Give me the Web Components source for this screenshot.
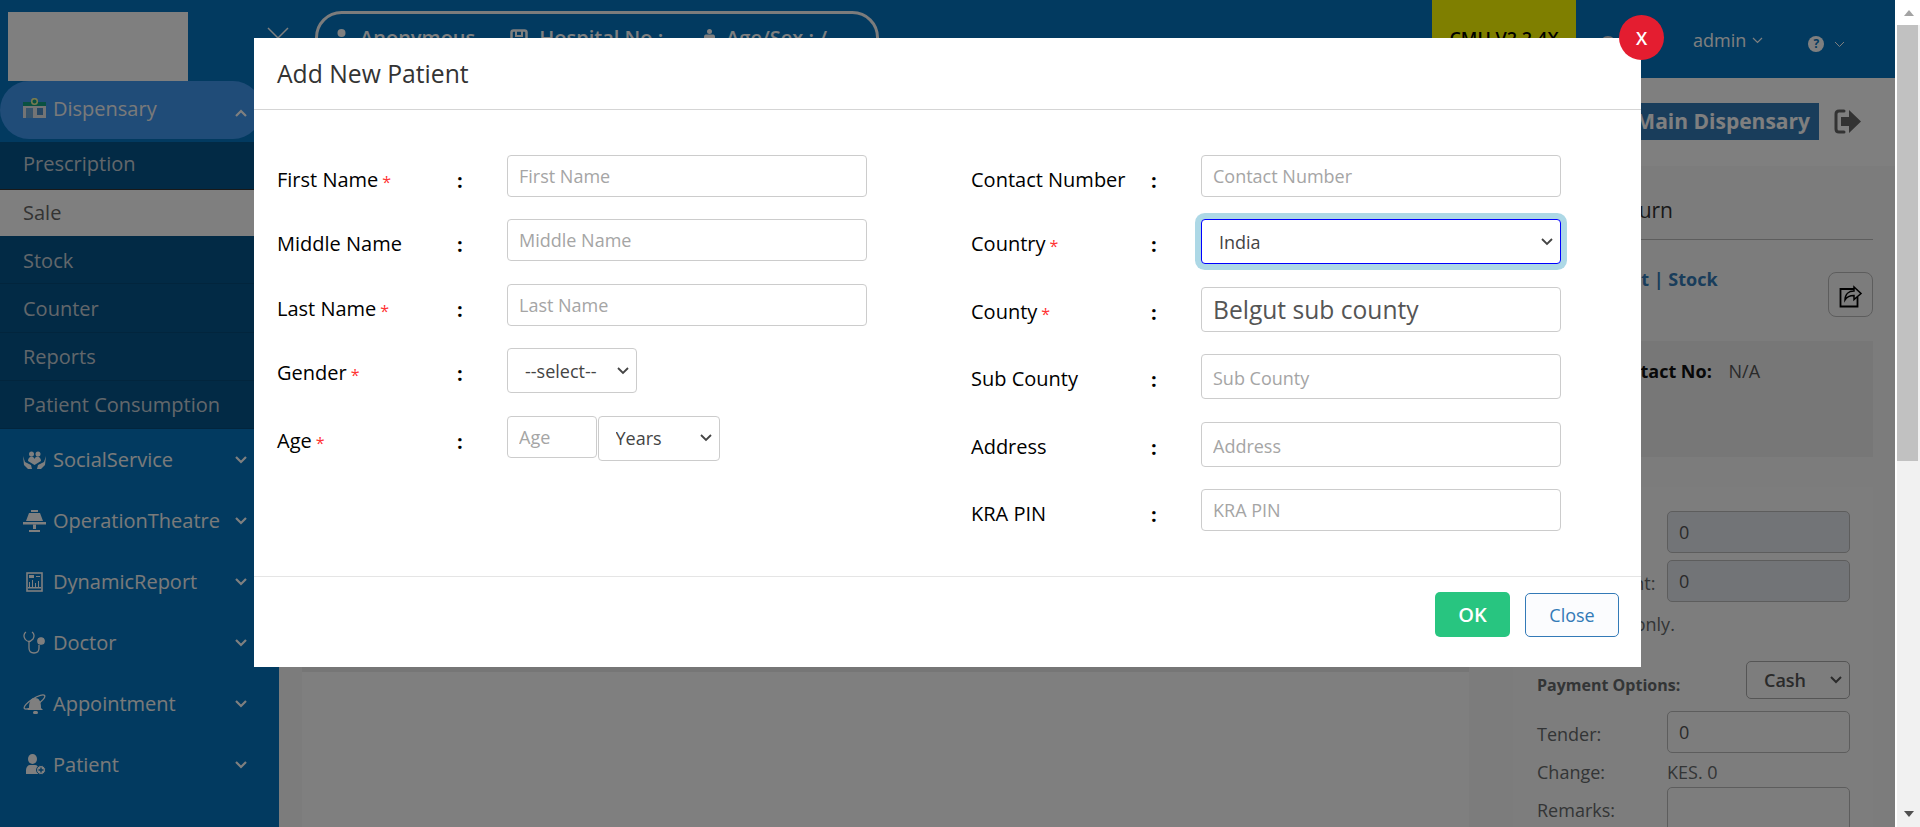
<!DOCTYPE html>
<html>
<head>
<meta charset="utf-8">
<title>Add New Patient</title>
<style>
    html, body { margin: 0; padding: 0; height: 100%; overflow: hidden; }
    body { font-family: "Open Sans", "Noto Sans", sans-serif; }
</style>
</head>
<body>
<app-shell>
    <side-bar slot="side">
        <nav-item label="Dispensary" open>
            <svg slot="icon" width="23" height="20" viewBox="0 0 23 20"><rect x="0" y="8" width="23" height="12" fill="#e6e8ea"/><rect x="0" y="4" width="23" height="4" fill="#12a285"/><circle cx="11.500" cy="3.500" r="2.800" fill="#12a285" stroke="#f2f4a0" stroke-width="1.500"/><rect x="3" y="10" width="7" height="10" fill="#6fa8d8"/><rect x="14" y="10" width="6" height="7" fill="#4f8fc8"/></svg>
            <sub-item first>Prescription</sub-item>
            <sub-item active>Sale</sub-item>
            <sub-item>Stock</sub-item>
            <sub-item>Counter</sub-item>
            <sub-item>Reports</sub-item>
            <sub-item>Patient Consumption</sub-item>
        </nav-item>
        <nav-item label="SocialService">
            <svg slot="icon" width="23" height="18" viewBox="0 0 23 18" fill="#fff"><circle cx="8.500" cy="3" r="2.500"/><circle cx="15" cy="3" r="2.500"/><path d="M5 10c0-3 2-4.500 3.500-4.500S11 6.500 11.500 8c.5-1.500 1.500-2.500 3-2.500S18 7 18 10l-6.500 4z"/><path d="M0 5l2 6 6 3 1 4H5L1 14zM23 5l-2 6-6 3-1 4h4l4-4z"/></svg>
        </nav-item>
        <nav-item label="OperationTheatre">
            <svg slot="icon" width="23" height="22" viewBox="0 0 23 22" fill="#fff"><path d="M8 0h7v2h-7zM6 3h11l3 8H3z"/><rect x="0" y="12" width="23" height="2.500"/><path d="M10 14.500h3V19h-3zM6 20h11v2H6z"/></svg>
        </nav-item>
        <nav-item label="DynamicReport">
            <svg slot="icon" width="23" height="20" viewBox="0 0 23 20"><rect x="4" y="1" width="15" height="18" fill="none" stroke="#fff" stroke-width="1.600"/><path d="M6 3h5v3H6zM13 4h4v1h-4zM6 15V10h1v5zM9 15V8h1v7zM12 15v-4h1v4zM15 15V9h1v6z" fill="#fff"/><rect x="5" y="15" width="13" height="1.500" fill="#fff"/></svg>
        </nav-item>
        <nav-item label="Doctor">
            <svg slot="icon" width="23" height="23" viewBox="0 0 23 23" fill="none" stroke="#fff" stroke-width="1.300"><path d="M3 1C.5 2.500.5 6 2 8c1 1.500 3 2.500 4 2.500S9 9 10 8c1.500-2 1.500-5.500-1-7"/><path d="M6 10.500V17c0 3 2 5 5 5s5-2 5-5v-3"/><circle cx="18" cy="10" r="3.200" fill="#fff"/></svg>
        </nav-item>
        <nav-item label="Appointment">
            <svg slot="icon" width="23" height="22" viewBox="0 0 23 22" fill="#fff"><path d="M6 15c0-7 2-10 6-10s6 3 6 10l2 2H4z"/><rect x="10" y="18" width="5" height="3" rx="1.500"/><ellipse cx="11.500" cy="9" rx="12" ry="3.500" fill="none" stroke="#fff" stroke-width="1.300" transform="rotate(-32 11.500 9)"/></svg>
        </nav-item>
        <nav-item label="Patient">
            <svg slot="icon" width="23" height="21" viewBox="0 0 23 21" fill="#fff"><ellipse cx="9.500" cy="5" rx="4.500" ry="5"/><path d="M3 20v-4c0-3 2-5 4-5h5c2 0 4 2 4 5v4z"/><circle cx="18" cy="16" r="4.500" stroke="#0474c0"/><path d="M17.300 13.500h1.400v1.800h1.800v1.400h-1.800v1.800h-1.400v-1.800h-1.800v-1.400h1.800z" fill="#0474c0"/></svg>
        </nav-item>
    </side-bar>
    <top-bar slot="top"></top-bar>
    <sub-header slot="top"></sub-header>
    <sale-page slot="top"></sale-page>
    <modal-dialog slot="over" heading="Add New Patient">
        <patient-form></patient-form>
    </modal-dialog>
</app-shell>

<script>
class AppShell extends HTMLElement {
    constructor() {
        super();
        this.attachShadow({ mode: 'open' });
    }

    connectedCallback() {
        this.shadowRoot.innerHTML = `
            <style>
                :host { display: flex; width: 1920px; height: 827px; overflow: hidden; }
                .app { position: relative; flex: 0 0 1895px; display: flex; height: 100%; overflow: hidden; background: #f8f8f8; }
                .right { flex: 1; min-width: 0; display: flex; flex-direction: column; }
                .dim { position: absolute; inset: 0; background: rgba(0, 0, 0, .5); }
                .bar { flex: 1; display: flex; flex-direction: column; background: #f1f1f1; border-left: 2px solid #fff; }
                .up { height: 25px; background: #fff; display: flex; align-items: center; justify-content: center; }
                .up i { border: 5px solid transparent; border-top: 0; border-bottom: 6px solid #a3a3a3; }
                .thumb { height: 436px; background: #c1c1c1; margin-right: 2px; }
                .gap { flex: 1; }
                .down { height: 27px; display: flex; align-items: center; justify-content: center; }
                .down i { border: 5px solid transparent; border-bottom: 0; border-top: 6px solid #505050; }
            </style>
            <div class="app">
                <slot name="side"></slot>
                <div class="right"><slot name="top"></slot></div>
                <div class="dim"></div>
                <slot name="over"></slot>
            </div>
            <div class="bar">
                <div class="up"><i></i></div>
                <div class="thumb"></div>
                <div class="gap"></div>
                <div class="down"><i></i></div>
            </div>
        `;
    }
}

class SideBar extends HTMLElement {
    constructor() {
        super();
        this.attachShadow({ mode: 'open' });
    }

    connectedCallback() {
        this.shadowRoot.innerHTML = `
            <style>
                :host { display: block; flex: 0 0 279px; height: 100%; background: #0474c0; overflow: hidden; }
                .logo { width: 180px; height: 69px; margin: 12px 0 0 8px; background: #fff; }
            </style>
            <div class="logo"></div>
            <slot></slot>
        `;
    }
}

class NavItem extends HTMLElement {
    constructor() {
        super();
        this.attachShadow({ mode: 'open' });
    }

    connectedCallback() {
        const open = this.hasAttribute('open');
        this.shadowRoot.innerHTML = `
            <style>
                :host { display: block; font-size: 20px; color: #f4f4f4; }
                .head { display: flex; align-items: center; box-sizing: border-box; height: 61px; padding-left: 23px; padding-right: 32px; }
                .icon { width: 30px; flex: none; display: flex; align-items: center; }
                .label { flex: 1; }
                :host([open]) .head { height: 58px; width: 262px; padding: 0 15px 4px 23px; background: #4098f0; border-radius: 29px; margin-bottom: 3px; }
                :host([open]) .chev { margin-top: 10px; }
                .chev { flex: none; }
            </style>
            <div class="head">
                <span class="icon"><slot name="icon"></slot></span>
                <span class="label">${this.getAttribute('label')}</span>
                <svg class="chev" width="12" height="8" viewBox="0 0 12 8" fill="none" stroke="#fff" stroke-width="2.200"><path d="${open ? 'M1 7l5-5 5 5' : 'M1 1l5 5 5-5'}"/></svg>
            </div>
            <slot></slot>
        `;
    }
}

class SubItem extends HTMLElement {
    constructor() {
        super();
        this.attachShadow({ mode: 'open' });
    }

    connectedCallback() {
        this.shadowRoot.innerHTML = `
            <style>
                :host { display: flex; align-items: center; height: 48.250px; box-sizing: border-box; padding: 1px 0 0 23px; font-size: 20px; color: #c4ced6; background: #04548a; border-bottom: 1px solid #044a7a; }
                :host([first]) { height: 48px; padding: 0 0 4px 23px; border-bottom-color: #333; }
                :host([active]) { height: 46px; padding: 0 0 2px 23px; background: #fff; color: #666; border-bottom: 0; }
            </style>
            <slot></slot>
        `;
    }
}

class TopBar extends HTMLElement {
    constructor() {
        super();
        this.attachShadow({ mode: 'open' });
    }

    connectedCallback() {
        this.shadowRoot.innerHTML = `
            <style>
                :host { display: flex; align-items: flex-start; height: 78px; background: #0474c0; color: #fff; flex: none; }
                .toggle { margin: 27px 0 0 -12px; flex: none; }
                .pill { flex: none; box-sizing: border-box; width: 564px; height: 53px; margin: 11px 0 0 26px; border: 3px solid #f8f8f8; border-radius: 30px; display: flex; align-items: center; padding-left: 17px; font-size: 20px; font-weight: 600; }
                .pill span { display: flex; align-items: center; gap: 10px; }
                .pill .a { margin-right: 35px; gap: 12px; }
                .pill .h { margin-right: 40px; gap: 11px; }
                .ver { flex: none; width: 144px; height: 78px; margin-left: 553px; box-sizing: border-box; background: #ff0; color: #000; font-size: 18px; font-weight: 600; display: flex; justify-content: center; padding-top: 26px; }
                .user { flex: none; width: 16px; height: 16px; margin: 36px 0 0 24px; border-radius: 50%; background: #ddd; }
                .admin { flex: none; margin: 28px 0 0 77px; font-size: 18px; display: flex; align-items: center; gap: 6px; }
                .help { flex: none; margin: 36px 0 0 45px; display: flex; align-items: center; gap: 10px; }
                .help b { width: 16px; height: 16px; border-radius: 50%; background: #fff; color: #0474c0; font-size: 12px; line-height: 16px; text-align: center; }
            </style>
            <svg class="toggle" width="22" height="22" viewBox="0 0 22 22" stroke="#fff" stroke-width="1.500" fill="none"><path d="M1 1l20 20M21 1L1 21"/></svg>
            <div class="pill">
                <span class="a"><svg width="13" height="18" viewBox="0 0 13 18" fill="#fff"><circle cx="6.500" cy="4" r="4"/><path d="M0 18v-5c0-3 2-4 4-4h5c2 0 4 1 4 4v5z"/></svg>Anonymous</span>
                <span class="h"><svg width="18" height="18" viewBox="0 0 18 18" fill="none" stroke="#fff" stroke-width="2.500"><rect x="1.500" y="1.500" width="15" height="15" rx="2"/><path d="M6 1v6h6V1" stroke-width="2"/></svg>Hospital No :</span>
                <span><svg width="13" height="18" viewBox="0 0 13 18" fill="#fff"><circle cx="6.500" cy="2.500" r="2.500"/><path d="M1 18V8c0-2 1-2.500 3-2.500h5c2 0 3 .5 3 2.500v10z"/></svg>Age/Sex : /</span>
            </div>
            <div class="ver">CMU V2.2.4X</div>
            <div class="user"></div>
            <div class="admin">admin<svg width="11" height="7" viewBox="0 0 11 7" fill="none" stroke="#fff" stroke-width="1.200"><path d="M1 1l4.500 4.500L10 1"/></svg></div>
            <div class="help"><b>?</b><svg width="11" height="7" viewBox="0 0 11 7" fill="none" stroke="#fff" stroke-width="1"><path d="M1 1l4.500 4.500L10 1"/></svg></div>
        `;
    }
}

class SubHeader extends HTMLElement {
    constructor() {
        super();
        this.attachShadow({ mode: 'open' });
    }

    connectedCallback() {
        this.shadowRoot.innerHTML = `
            <style>
                :host { display: flex; align-items: flex-start; justify-content: flex-end; flex: none; height: 88px; padding-right: 34px; background: #fff; box-sizing: border-box; }
                .tag { margin-top: 25px; height: 37px; line-height: 37px; padding: 0 9px; background: #337ab7; color: #fff; font-size: 21px; font-weight: 700; }
                svg { margin: 31px 0 0 15px; }
            </style>
            <div class="tag">Main Dispensary</div>
            <svg width="27" height="25" viewBox="0 0 27 25"><path d="M10 2H5C3 2 2 3 2 5v15c0 2 1 3 3 3h5" fill="none" stroke="#666" stroke-width="3" stroke-linecap="round"/><path d="M7 8h8V1l12 11.500L15 24v-7H7z" fill="#666"/></svg>
        `;
    }
}

class SalePage extends HTMLElement {
    constructor() {
        super();
        this.attachShadow({ mode: 'open' });
    }

    connectedCallback() {
        this.shadowRoot.innerHTML = `
            <style>
                :host { display: flex; flex: 1; min-height: 0; overflow: hidden; padding-left: 23px; background: #f8f8f8; color: #676a6c; font-size: 18px; }
                .grid { flex: 0 0 1167px; background: #fff; }
                .grid div { height: 506px; background: #ececec; }
                .col { flex: 0 0 380px; margin-left: 24px; box-sizing: border-box; }
                .title { display: flex; align-items: center; justify-content: flex-end; box-sizing: border-box; height: 73px; padding-top: 15px; width: 180px; font-size: 21px; color: #333; }
                .line { height: 1px; background: #bbb; }
                .links { display: flex; justify-content: space-between; align-items: flex-start; height: 101px; padding-top: 32px; box-sizing: border-box; }
                .links b { color: #337ab7; margin-left: 89px; margin-top: -5px; }
                .share { box-sizing: border-box; width: 45px; height: 45px; border: 1px solid #bbb; border-radius: 8px; display: flex; align-items: center; justify-content: center; }
                .contact { height: 116px; background: #eee; box-sizing: border-box; padding: 18px 0 0 113px; color: #555; }
                .contact b { color: #111; margin-right: 12px; }
                .card { margin: 30px 0 0 20px; padding: 24px 23px 0 24px; background: #fafafa; }
                .row { display: flex; align-items: flex-start; margin-bottom: 7px; }
                .row label { width: 130px; flex: none; padding-top: 11px; white-space: nowrap; }
                .row .box { flex: 1; box-sizing: border-box; height: 42px; border: 1px solid #bbb; border-radius: 5px; padding-left: 11px; line-height: 40px; color: #555; }
                .row .off { background: #e5e8ef; }
                .note { height: 30px; line-height: 30px; margin-bottom: 22px; }
                .pay { display: flex; justify-content: space-between; align-items: center; height: 38px; margin-bottom: 12px; }
                .pay b { font-size: 16px; margin-top: 10px; }
                .pay span { box-sizing: border-box; width: 104px; height: 38px; border: 1px solid #aaa; border-radius: 5px; display: flex; align-items: center; justify-content: space-between; padding: 0 7px 0 17px; font-weight: 600; color: #555; }
                .plain { height: 26px; margin-bottom: 1px; display: flex; }
                .plain label { width: 130px; }
                .ta { height: 60px !important; }
                .rem label { padding-top: 11px; }
            </style>
            <div class="grid"><div></div></div>
            <div class="col">
                <div class="title">Sales Return</div>
                <div class="line"></div>
                <div class="links"><b>Receipt | Stock</b><span class="share"><svg width="24" height="26" viewBox="0 0 24 26" fill="none" stroke="#000" stroke-width="1.800"><path d="M15 7H1.500v17.500h17V15"/><path d="M6 18c0-6 4-9 9-9V5l7 6.500-7 6v-4c-4 0-7 1-9 4.500z" fill="none" stroke-width="1.500"/></svg></span></div>
                <div class="contact"><b>Contact No:</b> N/A</div>
                <div class="card">
                    <div class="row"><label>Subtotal:</label><div class="box off">0</div></div>
                    <div class="row"><label>Total Amount:</label><div class="box off">0</div></div>
                    <div class="note">Pay in cash only.</div>
                    <div class="pay"><b>Payment Options:</b><span>Cash <svg width="12" height="8" viewBox="0 0 12 8" fill="none" stroke="#555" stroke-width="2"><path d="M1 1l5 5 5-5"/></svg></span></div>
                    <div class="row"><label>Tender:</label><div class="box">0</div></div>
                    <div class="plain"><label>Change:</label><span>KES. 0</span></div>
                    <div class="row rem"><label>Remarks:</label><div class="box ta"></div></div>
                </div>
            </div>
        `;
    }
}

class ModalDialog extends HTMLElement {
    constructor() {
        super();
        this.attachShadow({ mode: 'open' });
    }

    connectedCallback() {
        this.shadowRoot.innerHTML = `
            <style>
                :host { position: absolute; left: 254px; top: 38px; width: 1387px; height: 629px; background: #fff; display: flex; flex-direction: column; color: #000; }
                .head { flex: none; height: 71px; border-bottom: 1px solid #d5d5d5; display: flex; align-items: center; padding-left: 23px; font-size: 24.700px; color: #333; font-weight: 500; }
                .body { flex: 1; min-height: 0; }
                .foot { flex: none; box-sizing: border-box; height: 91px; border-top: 1px solid #e5e5e5; padding: 15px 22px 0 0; display: flex; justify-content: flex-end; align-items: flex-start; gap: 15px; }
                button { font-family: inherit; border-radius: 5px; cursor: pointer; }
                .ok { width: 75px; height: 45px; background: #28c580; border: 0; color: #fff; font-size: 20px; font-weight: 600; }
                .close { width: 94px; height: 44px; margin-top: 1px; background: #fbfcfe; border: 1px solid #337ab7; color: #337ab7; font-size: 18px; }
                .x { position: absolute; right: -23px; top: -23px; width: 45px; height: 45px; border-radius: 50%; background: #e41d30; color: #fff; font-size: 18px; font-weight: 600; display: flex; align-items: center; justify-content: center; }
            </style>
            <div class="head">${this.getAttribute('heading')}</div>
            <div class="body"><slot></slot></div>
            <div class="foot">
                <button class="ok">OK</button>
                <button class="close">Close</button>
            </div>
            <div class="x">X</div>
        `;
    }
}

class PatientForm extends HTMLElement {
    constructor() {
        super();
        this.attachShadow({ mode: 'open' });
    }

    connectedCallback() {
        this.shadowRoot.innerHTML = `
            <style>
                :host { display: flex; padding: 45px 0 0 23px; gap: 104px; }
                .col { flex: 0 0 590px; display: flex; flex-direction: column; gap: 22.400px; }
            </style>
            <div class="col">
                <form-row label="First Name" required><text-field placeholder="First Name"></text-field></form-row>
                <form-row label="Middle Name"><text-field placeholder="Middle Name"></text-field></form-row>
                <form-row label="Last Name" required><text-field placeholder="Last Name"></text-field></form-row>
                <form-row label="Gender" required><select-field width="130" options="--select--"></select-field></form-row>
                <form-row label="Age" required>
                    <text-field placeholder="Age" width="90"></text-field>
                    <select-field width="122" options="Years" style="margin-left: .500px"></select-field>
                </form-row>
            </div>
            <div class="col">
                <form-row label="Contact Number"><text-field placeholder="Contact Number"></text-field></form-row>
                <form-row label="Country" required><select-field options="India" focused></select-field></form-row>
                <form-row label="County" required><text-field value="Belgut sub county" big></text-field></form-row>
                <form-row label="Sub County"><text-field placeholder="Sub County" tall></text-field></form-row>
                <form-row label="Address"><text-field placeholder="Address" tall></text-field></form-row>
                <form-row label="KRA PIN"><text-field placeholder="KRA PIN"></text-field></form-row>
            </div>
        `;
    }
}

class FormRow extends HTMLElement {
    constructor() {
        super();
        this.attachShadow({ mode: 'open' });
    }

    connectedCallback() {
        const star = this.hasAttribute('required') ? '<i>*</i>' : '';
        this.shadowRoot.innerHTML = `
            <style>
                :host { display: flex; align-items: flex-start; }
                .label { flex: 0 0 180px; padding-top: 13px; font-size: 20px; line-height: 24px; font-weight: 500; color: #000; white-space: nowrap; }
                .label i { font-style: normal; font-size: 16px; line-height: 16px; vertical-align: -1px; color: #f33; margin-left: 4px; }
                .colon { flex: 0 0 50px; padding-top: 14px; font-size: 20px; line-height: 24px; font-weight: 700; color: #000; }
                .field { flex: 1; display: flex; align-items: flex-start; }
            </style>
            <div class="label">${this.getAttribute('label')}${star}</div>
            <div class="colon">:</div>
            <div class="field"><slot></slot></div>
        `;
    }
}

class TextField extends HTMLElement {
    constructor() {
        super();
        this.attachShadow({ mode: 'open' });
    }

    connectedCallback() {
        const width = this.getAttribute('width') || 360;
        const tall = this.hasAttribute('tall') || this.hasAttribute('big');
        const placeholder = this.getAttribute('placeholder');
        const value = this.getAttribute('value');
        this.shadowRoot.innerHTML = `
            <style>
                :host { display: block; flex: none; width: ${width}px; }
                input { display: block; box-sizing: border-box; width: 100%; height: ${tall ? 45 : 42}px; border: 1px solid #ccc; border-radius: 4px; padding: 0 11px; background: #fff; font-family: inherit; font-size: 18px; color: #555; outline: 0; }
                input::placeholder { color: #a5a5a5; opacity: 1; }
                :host([tall]) input { padding-top: 3px; }
                :host([big]) input { font-size: 24.600px; font-weight: 500; }
            </style>
            <input ${placeholder ? `placeholder="${placeholder}"` : ''} ${value ? `value="${value}"` : ''}>
        `;
    }
}

class SelectField extends HTMLElement {
    constructor() {
        super();
        this.attachShadow({ mode: 'open' });
    }

    connectedCallback() {
        const width = this.getAttribute('width') || 360;
        const options = this.getAttribute('options').split(',').map(o => `<option>${o}</option>`).join('');
        this.shadowRoot.innerHTML = `
            <style>
                :host { display: grid; flex: none; width: ${width}px; }
                select, svg { grid-area: 1 / 1; }
                select { appearance: none; display: block; box-sizing: border-box; width: 100%; height: 45px; border: 1px solid #ccc; border-radius: 4px; padding: 0 17px; background: #fff; font-family: inherit; font-size: 18px; color: #444; outline: 0; }
                svg { justify-self: end; align-self: center; margin-right: 8px; pointer-events: none; }
                :host([focused]) select { border-color: #00f; box-shadow: 0 0 0 6px #add8e6; }
            </style>
            <select>${options}</select>
            <svg width="12" height="8" viewBox="0 0 12 8" fill="none" stroke="#444" stroke-width="1.800"><path d="M1 1l5 5 5-5"/></svg>
        `;
    }
}

customElements.define('app-shell', AppShell);
customElements.define('side-bar', SideBar);
customElements.define('nav-item', NavItem);
customElements.define('sub-item', SubItem);
customElements.define('top-bar', TopBar);
customElements.define('sub-header', SubHeader);
customElements.define('sale-page', SalePage);
customElements.define('modal-dialog', ModalDialog);
customElements.define('patient-form', PatientForm);
customElements.define('form-row', FormRow);
customElements.define('text-field', TextField);
customElements.define('select-field', SelectField);
</script>
</body>
</html>
